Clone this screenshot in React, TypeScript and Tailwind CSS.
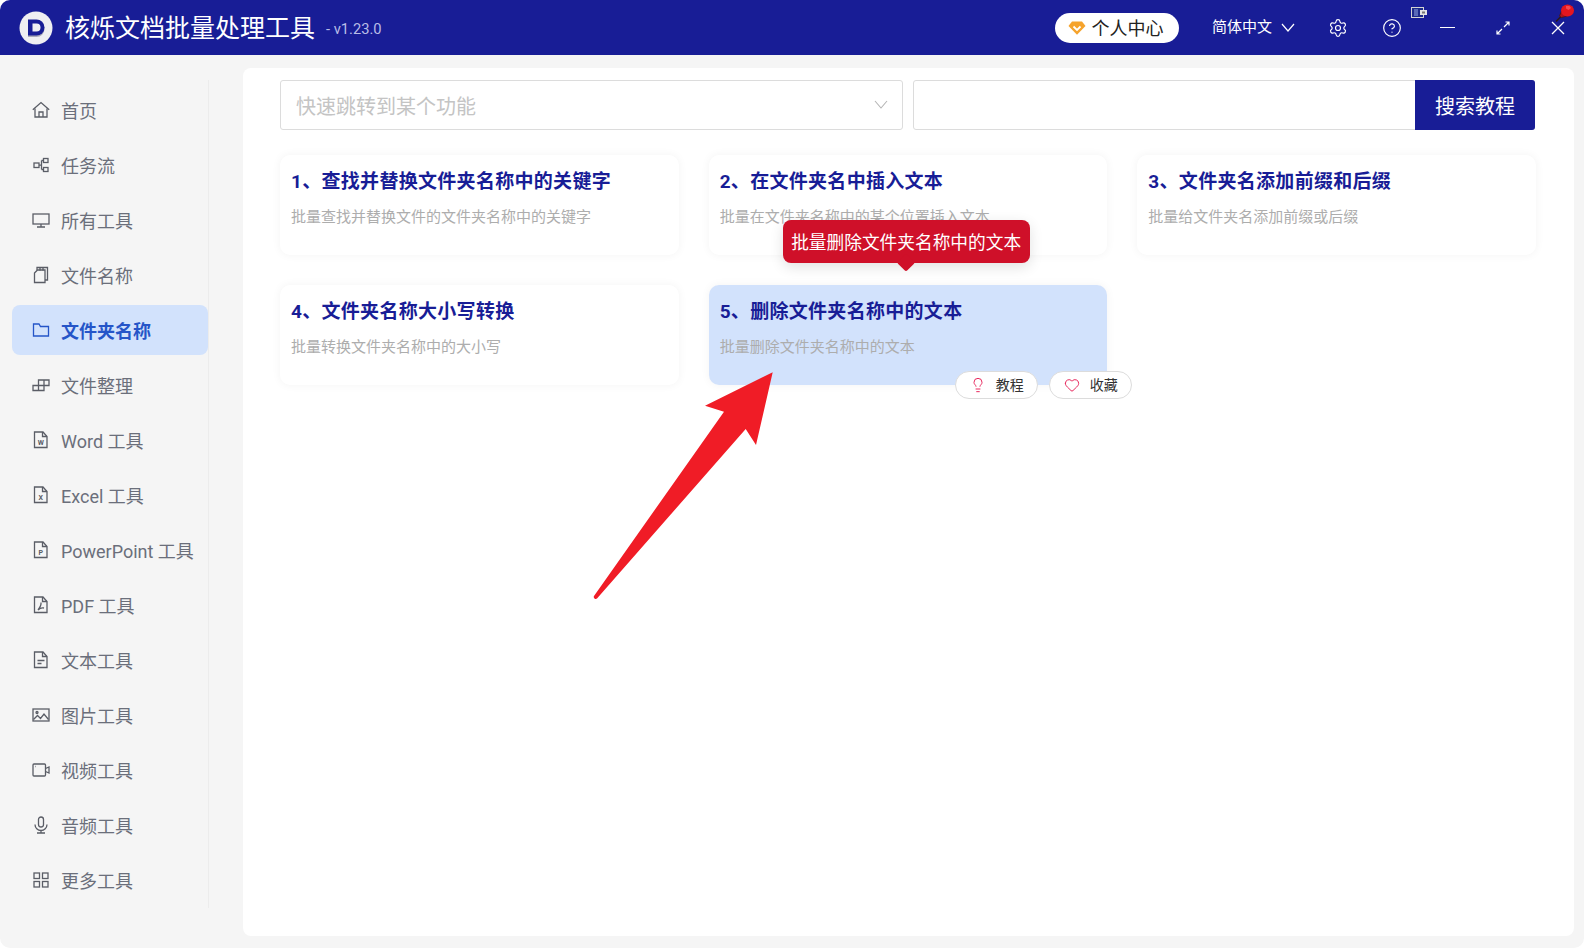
import { ReactNode } from 'react';
import { CircleHelp, Heart, Lightbulb, Settings } from 'lucide-react';

const docIcon = (inner: ReactNode) => (
  <>
    <path d="M2.500 1h8.500l4 4.500V16.500h-12.500z" />
    <path d="M10.500 1v4.500H15" />
    {inner}
  </>
);

const docLetter = (letter: string) => (
  <text x="8.800" y="14" fontSize="7" textAnchor="middle" stroke="none" fill="currentColor" fontWeight="700">
    {letter}
  </text>
);

const navItems: { label: string; icon: ReactNode; active?: boolean }[] = [
  { label: '首页', icon: <><path d="M.8 8.800 9 1.500l8.200 7.300" /><path d="M3 7.500V16h12V7.500" /><path d="M7 16v-5h4v5" /></> },
  { label: '任务流', icon: <><rect x="2" y="7" width="5" height="4.500" /><rect x="11.500" y="2.500" width="4.500" height="4" /><rect x="11.500" y="11.500" width="4.500" height="4" /><path d="M7 9.200h2.500M9.500 4.500v9M9.500 4.500h2M9.500 13.500h2" /></> },
  { label: '所有工具', icon: <><rect x="1" y="3" width="16" height="10" /><path d="M9 13v3M5 16h8" /></> },
  { label: '文件名称', icon: <><path d="M5 4V1.500h10.500v12.500H13" /><path d="M2.500 7 5.500 4h7.500v12.500H2.500z" /><path d="M8 1.500v3M11 1.500v3" /></> },
  { label: '文件夹名称', active: true, icon: <path d="M1.500 3h5.500l1.500 2.500h8v9.500h-15z" /> },
  { label: '文件整理', icon: <path d="M1 9.500h5.500V14.500H1zM6.500 14.500h5.500V9.500H6.500zM6.500 9.500V4h5.500v5.500M12 4h5v5.500h-5" /> },
  { label: 'Word 工具', icon: docIcon(docLetter('W')) },
  { label: 'Excel 工具', icon: docIcon(docLetter('X')) },
  { label: 'PowerPoint 工具', icon: docIcon(docLetter('P')) },
  { label: 'PDF 工具', icon: docIcon(<path d="M9 6.500c.5 3-1.500 5.500-3 7.500 2-2 4-2.500 6-2" />) },
  { label: '文本工具', icon: docIcon(<path d="M5.500 9.500h7M5.500 12.500h4" />) },
  { label: '图片工具', icon: <><rect x="1" y="3" width="16" height="12" /><circle cx="5" cy="6.500" r="1" /><path d="m1.500 13.500 4-4 3 3 3.500-4.500 4.500 5.500" /></> },
  { label: '视频工具', icon: <><rect x="1" y="3" width="12.500" height="12" rx="1" /><path d="M13.500 7.500 17 6v6l-3.500-1.500" /><path d="M3.500 5.500h.5" /></> },
  { label: '音频工具', icon: <><rect x="6.500" y="1" width="5" height="10" rx="2.500" /><path d="M3 8.500a6 6 0 0 0 12 0M9 14.500v2.500M5 17h8" /></> },
  { label: '更多工具', icon: <><rect x="2" y="2" width="5.500" height="5.500" /><rect x="10.500" y="2" width="5.500" height="5.500" /><rect x="2" y="10.500" width="5.500" height="5.500" /><rect x="10.500" y="10.500" width="5.500" height="5.500" /></> },
];

const cards = [
  { title: '1、查找并替换文件夹名称中的关键字', desc: '批量查找并替换文件的文件夹名称中的关键字' },
  { title: '2、在文件夹名中插入文本', desc: '批量在文件夹名称中的某个位置插入文本' },
  { title: '3、文件夹名添加前缀和后缀', desc: '批量给文件夹名添加前缀或后缀' },
  { title: '4、文件夹名称大小写转换', desc: '批量转换文件夹名称中的大小写' },
  { title: '5、删除文件夹名称中的文本', desc: '批量删除文件夹名称中的文本', active: true },
];

const Logo = () => (
  <svg width="34" height="34" viewBox="0 0 34 34" className="shrink-0">
    <circle cx="17" cy="17" r="16.500" fill="#efeff2" />
    <path d="M9 10h8.500a8 8 0 0 1 0 16H9z" fill="#a9a9b8" />
    <path d="M9 8.500h8.500a8 8 0 0 1 0 16H9z" fill="#181d96" />
    <path d="M13.500 12.500h4a4 4 0 0 1 0 8h-4z" fill="#efeff2" />
  </svg>
);

const Header = () => (
  <header className="flex h-[55px] shrink-0 items-center bg-[#181d96] pl-[19px] text-white">
    <Logo />
    <span className="ml-3 mt-[2px] text-[25px] leading-none">核烁文档批量处理工具</span>
    <span className="ml-[11px] mt-[3px] text-[14.700px] text-[#b9bde6]">- v1.23.0</span>
    <div className="ml-auto flex h-[30px] w-[124px] items-center justify-center gap-[5px] rounded-full bg-white pr-[2px] pt-[1px] text-[18px] text-[#222]">
      <svg width="18" height="14" viewBox="0 0 18 14">
        <path d="M4 .5h10l3.500 4.500L9 13.800.5 5z" fill="#f5a32c" />
        <path d="M5.500 5.500 9 9l3.500-3.500" fill="none" stroke="#fff" strokeWidth="1.800" />
      </svg>
      个人中心
    </div>
    <span className="ml-[33px] text-[15px]">简体中文</span>
    <svg width="14" height="9" viewBox="0 0 14 9" fill="none" stroke="#fff" strokeWidth="1.200" className="ml-[9px]">
      <path d="m1 1 6 7 6-7" />
    </svg>
    <Settings size={20} strokeWidth={1.4} className="ml-[33px]" />
    <CircleHelp size={20} strokeWidth={1.4} className="ml-[34px]" />
    <span className="ml-[38px] h-px w-[15px] bg-white" />
    <svg width="14" height="14" viewBox="0 0 14 14" className="ml-[41px]" fill="none" stroke="#fff" strokeWidth="1.200">
      <path d="M8 6 13 1M9.500 1H13v3.500M6 8l-5 5M4.500 13H1V9.500" />
    </svg>
    <svg width="14" height="14" viewBox="0 0 14 14" className="ml-[41px] mr-[19px]" fill="none" stroke="#fff" strokeWidth="1.300">
      <path d="m1 1 12 12M13 1 1 13" />
    </svg>
  </header>
);

const Sidebar = () => (
  <aside className="w-[243px] shrink-0 pl-3 pt-[25px]">
    <nav className="flex w-[197px] flex-col gap-[5px] border-r border-[#ececec] pb-[3px] pt-[5px]">
      {navItems.map((item) => (
        <div
          key={item.label}
          className={`flex h-[50px] w-[196px] items-center gap-[11px] rounded-lg pl-5 text-[18px] ${
            item.active ? 'bg-[#d2e2fc] font-bold text-[#2555c8]' : 'text-[#6b6f7b]'
          }`}
        >
          <svg
            width="18"
            height="18"
            viewBox="0 0 18 18"
            fill="none"
            stroke="currentColor"
            strokeWidth="1.300"
            className={`shrink-0 ${item.active ? '' : 'text-[#5a5d66]'}`}
          >
            {item.icon}
          </svg>
          <span className="pt-[2px]">{item.label}</span>
        </div>
      ))}
    </nav>
  </aside>
);

const ToolCard = ({ title, desc, active }: { title: string; desc: string; active?: boolean }) => (
  <div className={`relative h-[100px] rounded-[10px] pl-[11px] pt-[15px] shadow-[0_0_10px_rgba(0,0,0,0.05)] ${active ? 'bg-[#d2e2fc]' : 'bg-white'}`}>
    <h3 className="text-[19px] font-bold leading-6 tracking-[0.3px] text-[#181d96]">{title}</h3>
    <p className="mt-[13px] text-[15px] leading-5 text-[#adadad]">{desc}</p>
    {active && (
      <>
        <div className="absolute -top-[65px] left-[74px] flex h-[43px] w-[247px] items-center justify-center rounded-lg bg-[#cf1029] pt-[3px] text-[17.700px] text-white shadow-[0_4px_14px_rgba(0,0,0,0.12)]">
          批量删除文件夹名称中的文本
          <span className="absolute -bottom-[6px] left-1/2 h-[13px] w-[13px] -translate-x-1/2 rotate-45 rounded-[2px] bg-[#cf1029]" />
        </div>
        <div className="absolute -bottom-[14px] -right-[25px] flex gap-[11px] text-[14px] text-[#333]">
          <span className="flex h-[28px] w-[83px] items-center justify-center gap-[10px] rounded-full border border-[#dcdcdc] bg-white">
            <Lightbulb size={16} strokeWidth={1.5} className="text-[#e8295e]" />
            <span className="pt-[1px]">教程</span>
          </span>
          <span className="flex h-[28px] w-[83px] items-center justify-center gap-[10px] rounded-full border border-[#dcdcdc] bg-white">
            <Heart size={16} strokeWidth={1.5} className="text-[#e8295e]" />
            <span className="pt-[1px]">收藏</span>
          </span>
        </div>
      </>
    )}
  </div>
);

export default function App() {
  return (
    <div className="relative flex h-[948px] w-[1584px] flex-col overflow-hidden rounded-[10px] bg-[#f5f5f5] font-['Roboto','Noto_Sans_CJK_SC',sans-serif]">
      <Header />
      <div className="flex flex-1">
        <Sidebar />
        <main className="mb-3 mr-[10px] mt-[13px] flex-1 rounded-lg bg-white pl-[37px] pr-[38px] pt-3">
          <div className="mr-px flex h-[50px] gap-[10px]">
            <div className="flex w-[623px] items-center justify-between rounded-[3px] border border-[#dcdcdc] pl-[15px] pr-[14px] pt-[4px] text-[20px] text-[#c4c4c4]">
              快速跳转到某个功能
              <svg width="14" height="9" viewBox="0 0 14 9" fill="none" stroke="#b5b5b5" strokeWidth="1.100" className="-mt-[5px]">
                <path d="m1 1 6 7 6-7" />
              </svg>
            </div>
            <div className="flex flex-1 rounded-[3px] border border-[#dcdcdc]">
              <div className="flex-1" />
              <button className="-my-px -mr-px w-[120px] rounded-r-[3px] bg-[#181d96] pt-[4px] text-[20px] text-white">搜索教程</button>
            </div>
          </div>
          <div className="mt-[25px] grid grid-cols-3 gap-x-[30px] gap-y-[30px]">
            {cards.map((card) => (
              <ToolCard key={card.title} {...card} />
            ))}
          </div>
        </main>
      </div>

      {/* tray widgets and annotation that sit on top of the app window */}
      <svg width="16" height="11" viewBox="0 0 16 11" className="absolute left-[1411px] top-[7px]">
        <rect x=".5" y=".5" width="12" height="10" fill="#1d2a8a" stroke="#d4d4d4" />
        <rect x="3" y="2" width="4" height="7" fill="#5a6ab8" />
        <rect x="9" y="3" width="7" height="5" fill="#e4e4e4" />
        <rect x="11" y="4.500" width="3" height="2" fill="#777" />
      </svg>
      <svg width="20" height="20" viewBox="0 0 20 20" className="absolute left-[1555px] top-[3px]">
        <path d="M1 18.500 5.500 14" stroke="#2b1a1a" strokeWidth="1.600" />
        <path d="M8.500 3.500 4.500 13l2 1.500 8-2z" fill="#b3121a" stroke="#4a1414" strokeWidth=".8" />
        <ellipse cx="12.500" cy="7.500" rx="6.500" ry="6" fill="#e5161f" />
        <path d="M11 3h3.500l1.500 2-2.500 2-2.500-1.500z" fill="#f5484f" />
      </svg>
      <svg width="190" height="240" viewBox="590 368 190 240" className="pointer-events-none absolute left-[590px] top-[368px]">
        <path
          d="M772.700 372.300 705 405.700 724 411.700 594 596a2 2 0 0 0 3 2.500L745.700 429 756 445z"
          fill="#f01c26"
        />
      </svg>
    </div>
  );
}
